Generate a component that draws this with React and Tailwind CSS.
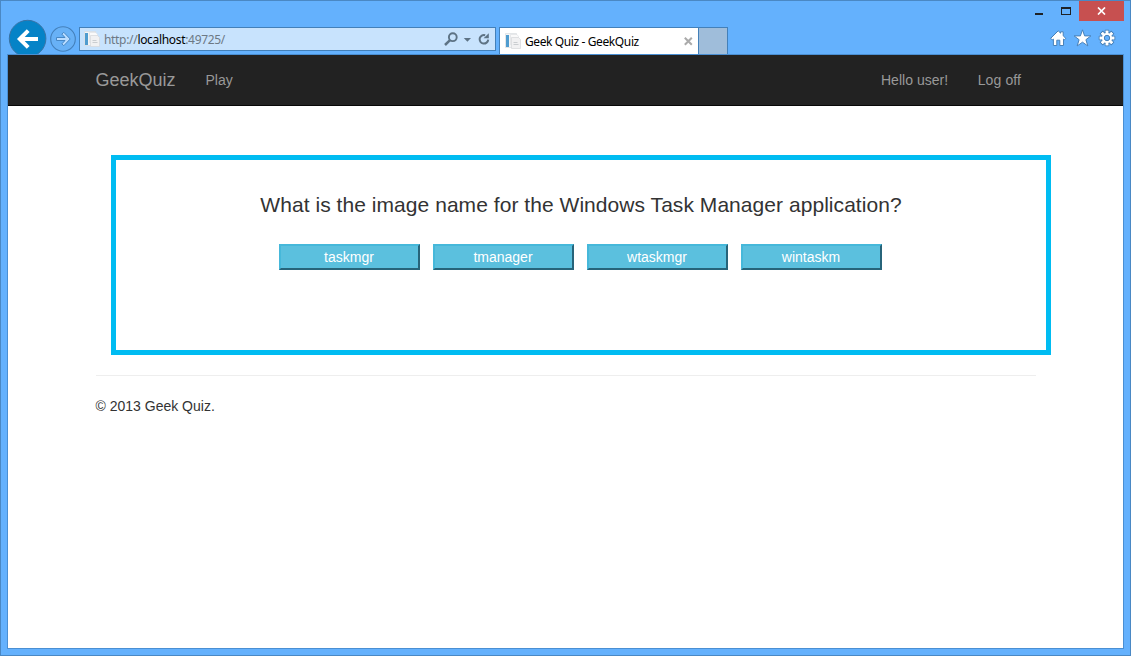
function PageIcon() {
  return (
    <svg width="17" height="17" viewBox="0 0 17 17" className="block shrink-0">
      <path d="M.5 .5h11v14H.5z" fill="#f4f5f6" stroke="#d3d8dc" strokeWidth=".6" />
      <rect x="1" y="2" width="3" height="12" fill="#4f9ccf" />
      <path d="M5.5 1.5h6.5l1.5 2v8h-8z" fill="#fafafa" stroke="#dcdee0" strokeWidth=".6" />
      <path d="M6.5 4.5h7l2 2v9h-9z" fill="#f1f1f2" stroke="#d5d7da" strokeWidth=".7" />
      <path d="M8.5 9.5h4M8.5 11.5h5" stroke="#c5c8cc" strokeWidth=".9" />
    </svg>
  );
}

function TitleBar() {
  return (
    <div className="flex h-[20px] shrink-0 justify-end pr-[6px]">
      <svg width="45" height="20" viewBox="0 0 45 20" className="block">
        <rect x="1" y="12" width="8" height="2" fill="#1e2226" />
        <path d="M27 6h10v8H27zM28 8v5h8V8z" fill="#1e2226" fillRule="evenodd" />
      </svg>
      <button className="flex h-[20px] w-[45px] items-center justify-center bg-[#c75050]" aria-label="Close">
        <svg width="9" height="8" viewBox="0 0 9 8">
          <path d="M1 .5L8 7.5M8 .5L1 7.5" stroke="#fff" strokeWidth="1.7" />
        </svg>
      </button>
    </div>
  );
}

function NavButtons() {
  return (
    <svg width="70" height="36" viewBox="8 18 70 36" className="-mt-[3px] block h-[36px] shrink-0">
      <circle cx="27.6" cy="38.6" r="18.3" fill="#0583c7" stroke="#3973a5" strokeWidth="1" />
      <path d="M38 39H20M28.2 30.6L19.8 39l8.4 8.4" fill="none" stroke="#fff" strokeWidth="4" />
      <circle cx="63" cy="39" r="12.3" fill="#68b1f6" stroke="#4480bb" strokeWidth="1.1" />
      <path d="M56.5 37.5h8.5l-3.2-3.4 2-1.8 6.4 6.7-6.4 6.7-2-1.8 3.2-3.4h-8.5z" fill="#b9dcff" stroke="#4687c5" strokeWidth="1" />
    </svg>
  );
}

function AddressBar() {
  return (
    <div className="mt-[6px] ml-px flex h-[24px] w-[417px] shrink-0 items-center border border-[#4380b9] bg-[#c8e3fd] pl-[4px] font-['Noto_Sans',sans-serif] text-[12px] text-[#6d7985]">
      <PageIcon />
      <span className="ml-[3px] w-[339px] pt-[2px] leading-[22px] tracking-[-0.32px] whitespace-nowrap">
        http://<span className="text-black">localhost</span>:49725/
      </span>
      <svg width="50" height="22" viewBox="0 0 50 22" className="block shrink-0">
        <g fill="none" stroke="#5d7385">
          <circle cx="9.8" cy="9.2" r="3.9" strokeWidth="1.9" />
          <path d="M7 12.2L2 17" strokeWidth="2.5" />
          <path d="M42.2 7.2A4.3 4.3 0 1 0 45.2 11.6" strokeWidth="2" />
        </g>
        <path d="M20.8 10h7.2l-3.6 3.7z" fill="#5d7385" />
        <path d="M45.8 5.2v5h-5.2z" fill="#5d7385" />
      </svg>
    </div>
  );
}

function Tabs() {
  return (
    <div className="mt-[6px] ml-[3px] flex h-[27px] shrink-0">
      <div className="flex w-[200px] items-center border border-b-0 border-[#4380b9] bg-white pl-[5px]">
        <PageIcon />
        <span className="ml-[3px] w-[158.5px] pt-[2px] font-['Noto_Sans',sans-serif] text-[12px] leading-[24px] tracking-[-0.39px] whitespace-nowrap text-black">
          Geek Quiz - GeekQuiz
        </span>
        <svg width="9" height="9" viewBox="0 0 9 9" className="block shrink-0">
          <path d="M.8.8l7 7M7.8.8l-7 7" stroke="#aaa" strokeWidth="2" />
        </svg>
      </div>
      <div className="w-[29px] border border-b-0 border-l-0 border-[#4380b9] bg-[#9fbdda]" />
    </div>
  );
}

const gearTeeth = [0, 45, 90, 135, 180, 225, 270, 315];

function Tools() {
  return (
    <svg width="68" height="20" viewBox="1049 29 68 20" className="mt-[8px] mr-[13px] ml-auto block shrink-0">
      <g fill="#fff" stroke="#4780b8" strokeWidth="1" strokeLinejoin="round">
        <path d="M1050.6 38.4l7.6-7.6 2.4 2.4v-1.4h2.6v4l2.6 2.6-1.4 1.4-.9-.7v6.4h-3.7v-5.3h-3v5.3h-3.4v-6.4l-1.1.7z" />
        <path d="M1082.5 29.8l2.1 6.1h6.3l-5 3.8 1.9 6.2-5.3-3.7-5.3 3.7 1.9-6.2-5-3.8h6.3z" />
        <g>
          {gearTeeth.map((a) => (
            <rect key={a} x="1105.2" y="30.2" width="3.6" height="5" transform={`rotate(${a} 1107 38)`} />
          ))}
          <circle cx="1107" cy="38" r="5.6" />
        </g>
      </g>
      {gearTeeth.map((a) => (
        <rect key={a} x="1105.7" y="30.8" width="2.6" height="4" fill="#fff" transform={`rotate(${a} 1107 38)`} />
      ))}
      <circle cx="1107" cy="38" r="2.7" fill="#64b1fd" stroke="#4780b8" />
    </svg>
  );
}

function Navbar() {
  return (
    <nav className="flex h-[51px] items-center border-b border-[#080808] bg-[#222] pr-[102px] pl-[87.5px] text-[14px] leading-[20px] text-[#999]">
      <span className="w-[110px] text-[18px]">GeekQuiz</span>
      <span>Play</span>
      <span className="ml-auto tracking-[0.03px]">Hello user!</span>
      <span className="ml-[29.5px] tracking-[0.1px]">Log off</span>
    </nav>
  );
}

const answers = ["taskmgr", "tmanager", "wtaskmgr", "wintaskm"];

export default function App() {
  return (
    <div className="flex h-[656px] w-[1131px] flex-col overflow-hidden border border-[#4a88c4] bg-[#64b1fd] font-['Liberation_Sans',Arial,sans-serif]">
      <TitleBar />
      <div className="flex h-[33px] shrink-0 items-start pl-[7px]">
        <NavButtons />
        <AddressBar />
        <Tabs />
        <Tools />
      </div>
      <div className="mr-[6px] ml-[6px] h-[595px] shrink-0 border border-[#4a8fd3] bg-white">
        <Navbar />
        <main className="ml-[88px] w-[940px] pt-[49px] text-[14px] text-[#333]">
          <section className="ml-[15px] h-[200px] w-[940px] border-[5px] border-[#00bcf2] pt-[33px] text-center">
            <h1 className="text-[21px] leading-[24px] tracking-[0.05px]">
              What is the image name for the Windows Task Manager application?
            </h1>
            <div className="mt-[27px] flex justify-center gap-[13px] pr-[2px]">
              {answers.map((answer) => (
                <button
                  key={answer}
                  className="h-[26px] w-[141px] border-2 border-t-[#46b8da] border-r-[#27647a] border-b-[#27647a] border-l-[#46b8da] bg-[#5bc0de] text-[14px] leading-[22px] text-white"
                >
                  {answer}
                </button>
              ))}
            </div>
          </section>
          <hr className="mt-[20px] border-[#eee]" />
          <p className="mt-[20px] -ml-[0.5px] leading-[20px]">© 2013 Geek Quiz.</p>
        </main>
      </div>
    </div>
  );
}
